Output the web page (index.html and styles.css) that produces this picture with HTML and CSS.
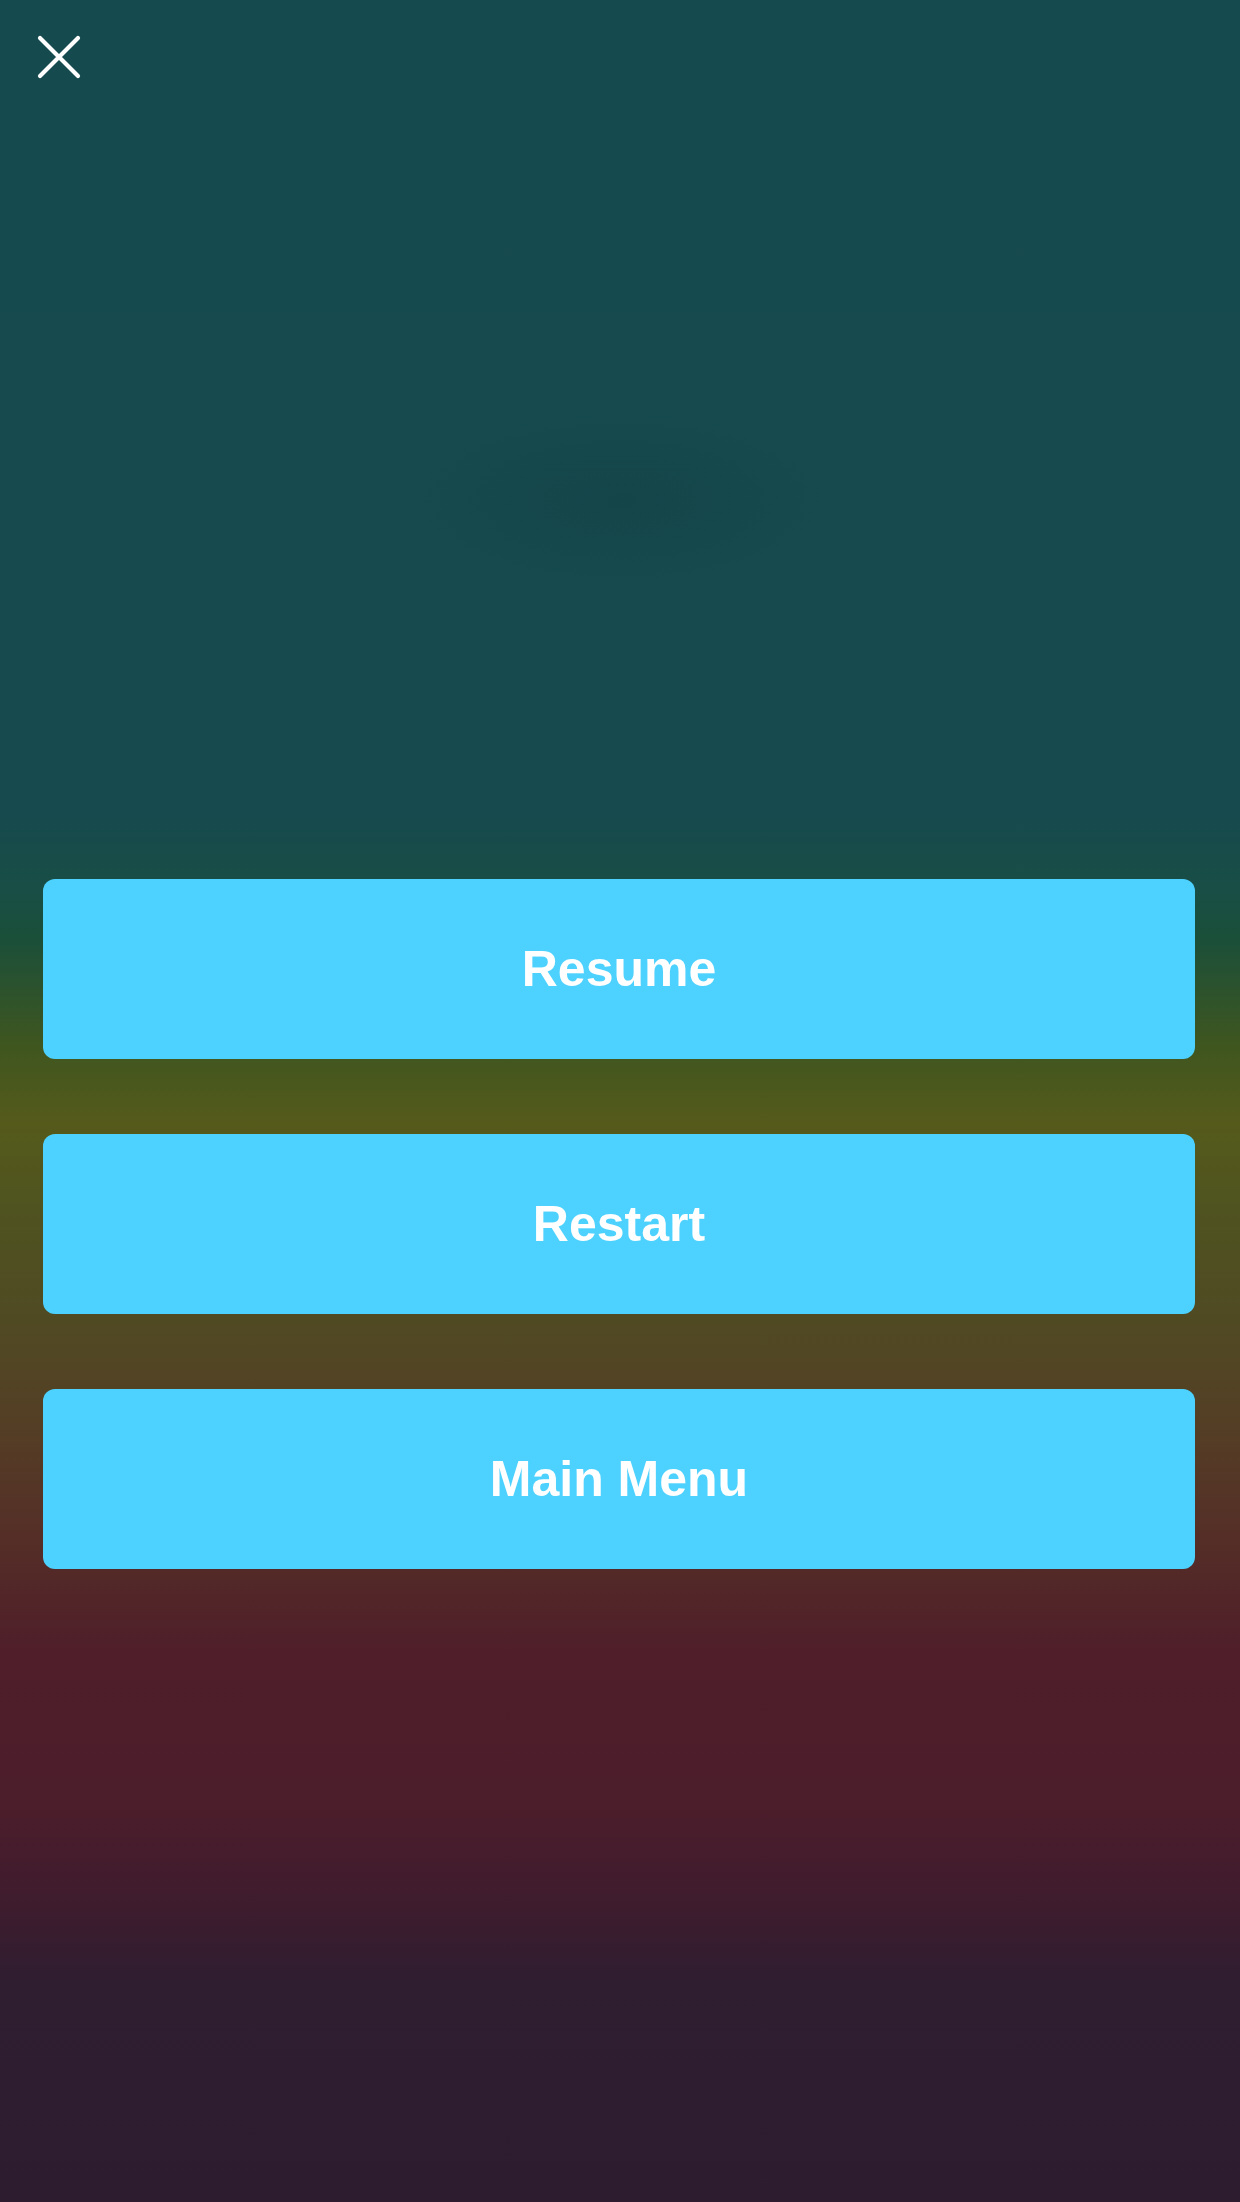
FILE: index.html
```html
<!DOCTYPE html>
<html lang="en">
<head>
<meta charset="utf-8">
<title>Paused</title>
<link rel="stylesheet" href="styles.css">
</head>
<body>
<div class="screen">
  <header class="topbar">
    <button class="close" aria-label="Close">
      <svg width="44" height="44" viewBox="0 0 44 44" aria-hidden="true">
        <path d="M3 3 L41 41 M41 3 L3 41" stroke="#ffffff" stroke-width="4.2" stroke-linecap="round" fill="none"/>
      </svg>
    </button>
  </header>
  <nav class="menu">
    <button class="menu-btn">Resume</button>
    <button class="menu-btn">Restart</button>
    <button class="menu-btn">Main Menu</button>
  </nav>
</div>
</body>
</html>
```

FILE: styles.css
```css
html, body {
  margin: 0;
  padding: 0;
}

body {
  width: 1240px;
  height: 2202px;
  overflow: hidden;
  font-family: "Liberation Sans", Arial, sans-serif;
}

.screen {
  width: 1240px;
  height: 2202px;
  display: flex;
  flex-direction: column;
  background:
    radial-gradient(ellipse 300px 120px at 620px 500px, rgba(16, 60, 64, 0.35), rgba(16, 60, 64, 0) 70%),
    linear-gradient(to bottom,
      #154a4e 0%,
      #164a4e 37%,
      #184e45 40.5%,
      #1a4f3a 42.5%,
      #3f561f 47.5%,
      #555a1b 51%,
      #4f5320 55%,
      #504a23 60%,
      #543f25 64.5%,
      #552e27 70%,
      #4f1e2a 75%,
      #4c1d2b 82%,
      #3e1c2e 86.5%,
      #2f1d30 90%,
      #2d1c30 100%);
}

.topbar {
  display: flex;
  padding: 35px 0 0 37px;
}

.close {
  width: 44px;
  height: 44px;
  padding: 0;
  margin: 0;
  border: 0;
  background: transparent;
  display: block;
  cursor: pointer;
}

.close svg {
  display: block;
}

.menu {
  display: flex;
  flex-direction: column;
  gap: 75px;
  padding: 0 45px 0 43px;
  margin-top: 800px;
}

.menu-btn {
  height: 180px;
  width: 100%;
  border: 0;
  border-radius: 12px;
  background: #4dd1ff;
  color: #ffffff;
  font-family: "Liberation Sans", Arial, sans-serif;
  font-weight: 700;
  font-size: 50px;
  letter-spacing: 0;
  padding: 0;
  margin: 0;
  cursor: pointer;
}
```
